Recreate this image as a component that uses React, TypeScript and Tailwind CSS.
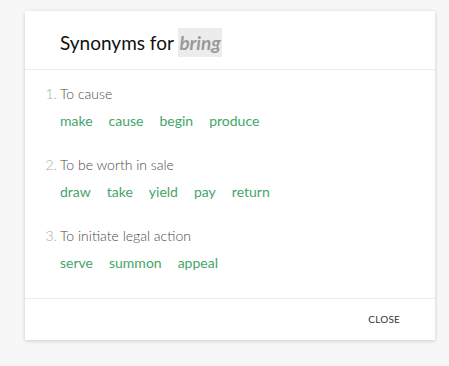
const groups = [
  { label: "To cause", words: ["make", "cause", "begin", "produce"] },
  { label: "To be worth in sale", words: ["draw", "take", "yield", "pay", "return"] },
  { label: "To initiate legal action", words: ["serve", "summon", "appeal"] },
];

export default function App() {
  return (
    <div
      className="min-h-[366px] w-[449px] bg-[#f7f7f7] pt-[11px] pl-[25px]"
      style={{ fontFamily: "Lato, 'Open Sans', sans-serif" }}
    >
      <div className="w-[410px] bg-white shadow-[0_1px_4px_rgba(0,0,0,0.18)]">
        <div className="flex h-[59px] items-center border-b border-[#ececec] pl-[35px] pt-[5px]">
          <h2 className="text-[19px] leading-none text-[#111]">
            Synonyms for{" "}
            <span className="bg-[#ececec] px-[1px] py-[3px] font-bold italic text-[#999]">bring</span>
          </h2>
        </div>

        <ol className="pt-[13px] pb-[26px]">
          {groups.map((g, i) => (
            <li key={g.label} className="mb-[24px] last:mb-0">
              <div className="flex h-[20px] items-center text-[14px] font-light text-[#4a4a4a]">
                <span className="w-[35px] pr-[3px] text-right text-[#aaa]">{i + 1}.</span>
                <span>{g.label}</span>
              </div>
              <div className="mt-[7px] flex h-[20px] items-center gap-[16px] pl-[35px] text-[14px] text-[#45a56b]">
                {g.words.map((w) => (
                  <span key={w}>{w}</span>
                ))}
              </div>
            </li>
          ))}
        </ol>

        <div className="flex h-[42px] items-center justify-end border-t border-[#ececec] pr-[35px]">
          <button className="text-[10px] uppercase tracking-[0.02em] text-[#333]">Close</button>
        </div>
      </div>
    </div>
  );
}
